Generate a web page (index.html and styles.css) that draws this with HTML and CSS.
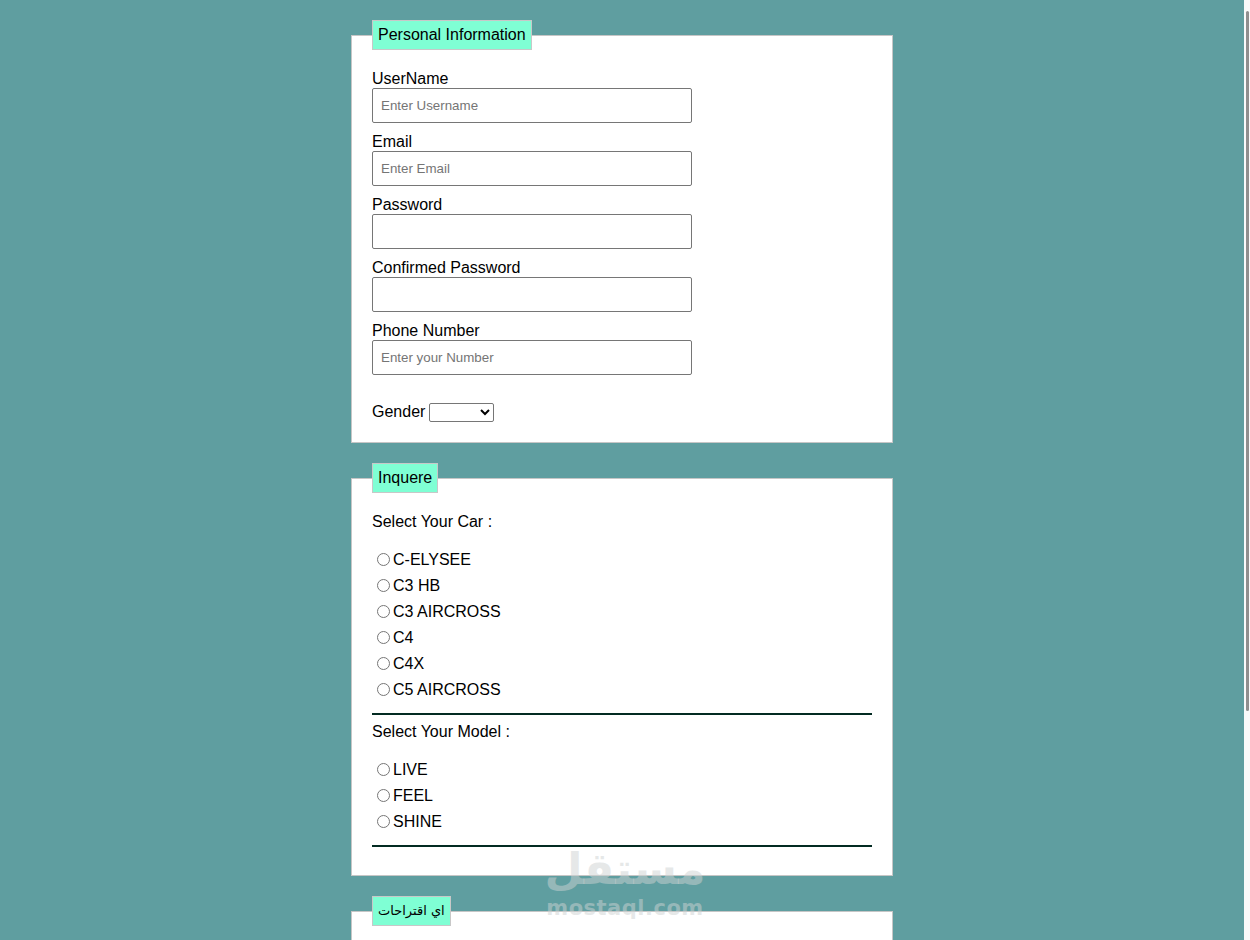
FILE: index.html
```html
<!DOCTYPE html>
<html lang="en">
<head>
<meta charset="utf-8">
<title>Registration</title>
<link rel="stylesheet" href="styles.css">
</head>
<body>
<form class="form">
  <fieldset class="box">
    <legend class="box-title">Personal Information</legend>
    <div class="field">
      <label class="field-label" for="user">UserName</label>
      <input class="text-input" id="user" type="text" placeholder="Enter Username">
    </div>
    <div class="field">
      <label class="field-label" for="mail">Email</label>
      <input class="text-input" id="mail" type="email" placeholder="Enter Email">
    </div>
    <div class="field">
      <label class="field-label" for="pass">Password</label>
      <input class="text-input" id="pass" type="password">
    </div>
    <div class="field">
      <label class="field-label" for="pass2">Confirmed Password</label>
      <input class="text-input" id="pass2" type="password">
    </div>
    <div class="field">
      <label class="field-label" for="phone">Phone Number</label>
      <input class="text-input" id="phone" type="tel" placeholder="Enter your Number">
    </div>
    <div class="gender-row">
      <label for="gender">Gender</label>
      <select class="gender-select" id="gender">
        <option></option>
        <option>Male</option>
        <option>Female</option>
      </select>
    </div>
  </fieldset>

  <fieldset class="box">
    <legend class="box-title">Inquere</legend>
    <p class="group-title">Select Your Car :</p>
    <div class="choices">
      <label class="choice"><input type="radio" name="car">C-ELYSEE</label>
      <label class="choice"><input type="radio" name="car">C3 HB</label>
      <label class="choice"><input type="radio" name="car">C3 AIRCROSS</label>
      <label class="choice"><input type="radio" name="car">C4</label>
      <label class="choice"><input type="radio" name="car">C4X</label>
      <label class="choice"><input type="radio" name="car">C5 AIRCROSS</label>
    </div>
    <hr class="rule">
    <p class="group-title">Select Your Model :</p>
    <div class="choices">
      <label class="choice"><input type="radio" name="model">LIVE</label>
      <label class="choice"><input type="radio" name="model">FEEL</label>
      <label class="choice"><input type="radio" name="model">SHINE</label>
    </div>
    <hr class="rule">
  </fieldset>

  <fieldset class="box">
    <legend class="box-title box-title-ar" dir="rtl">اي اقتراحات</legend>
    <textarea class="notes" rows="8"></textarea>
    <div class="actions">
      <button class="send" type="submit">Submit</button>
    </div>
  </fieldset>
</form>

<div class="scroll-rail" aria-hidden="true">
  <span class="scroll-thumb"></span>
</div>

<div class="brand-mark" aria-hidden="true">
  <span class="brand-ar">مستقل</span>
  <span class="brand-en">mostaql.com</span>
</div>
</body>
</html>
```

FILE: styles.css
```css
html {
  background: #5f9ea0;
}

body {
  margin: 0 6px 0 0;
  background: #5f9ea0;
  font-family: "Liberation Sans", Arial, "DejaVu Sans", sans-serif;
  font-size: 16px;
  color: #000;
}

.form {
  margin: 0;
}

.box {
  width: 500px;
  margin: 20px auto;
  padding: 20px;
  background: #fff;
  border: 1px solid #c6c6c6;
}

.box-title {
  padding: 5px;
  background: #7fffd4;
  border: 1px solid #c8c8c8;
  line-height: 18px;
}

.box-title-ar {
  font-family: "DejaVu Sans", sans-serif;
  font-size: 13px;
}

.field {
  display: flex;
  flex-direction: column;
  align-items: flex-start;
  margin-bottom: 10px;
}

.field-label {
  display: block;
  line-height: 18px;
}

.text-input {
  box-sizing: border-box;
  width: 320px;
  height: 35px;
  padding: 0 8px;
  border: 1px solid #767676;
  border-radius: 2px;
  font-family: "Liberation Sans", Arial, sans-serif;
  font-size: 13.33px;
}

.text-input::placeholder {
  color: #757575;
}

.gender-row {
  display: flex;
  align-items: center;
  gap: 4px;
  margin-top: 27px;
  height: 20px;
}

.gender-select {
  box-sizing: border-box;
  width: 65px;
  height: 19px;
  font-family: "Liberation Sans", Arial, sans-serif;
  font-size: 13.33px;
  border: 1px solid #767676;
  border-radius: 2px;
  background: #fff;
}

.group-title {
  margin: 0 0 16px;
  line-height: 18px;
}

.choices {
  display: flex;
  flex-direction: column;
}

.choice {
  display: flex;
  align-items: center;
  height: 26px;
}

.choice input {
  margin: 0 3px 2px 5px;
  width: 13px;
  height: 13px;
}

.rule {
  height: 2px;
  margin: 10px 0 8px;
  border: none;
  background: #032b22;
}

.notes {
  box-sizing: border-box;
  width: 100%;
  height: 160px;
  border: 1px solid #767676;
  font-family: "Liberation Sans", Arial, sans-serif;
}

.actions {
  margin-top: 16px;
}

.send {
  font-family: "Liberation Sans", Arial, sans-serif;
  font-size: 16px;
  padding: 6px 18px;
}

/* thin scrollbar along the right edge of the window */
.scroll-rail {
  position: fixed;
  top: 0;
  right: 0;
  width: 6px;
  height: 100%;
  background: #fafafa;
}

.scroll-thumb {
  position: absolute;
  top: 11px;
  left: 2px;
  width: 3px;
  height: 700px;
  border-radius: 2px;
  background: #8f8f8f;
}

/* site watermark over the lower part of the page */
.brand-mark {
  position: absolute;
  left: 548px;
  top: 842px;
  width: 154px;
  display: flex;
  flex-direction: column;
  align-items: center;
  pointer-events: none;
  color: rgba(205, 210, 210, 0.5);
  font-family: "DejaVu Sans", sans-serif;
  font-weight: bold;
}

.brand-ar {
  font-size: 44px;
  line-height: 54px;
}

.brand-en {
  font-size: 21px;
  line-height: 24px;
  letter-spacing: 0.5px;
}
```
